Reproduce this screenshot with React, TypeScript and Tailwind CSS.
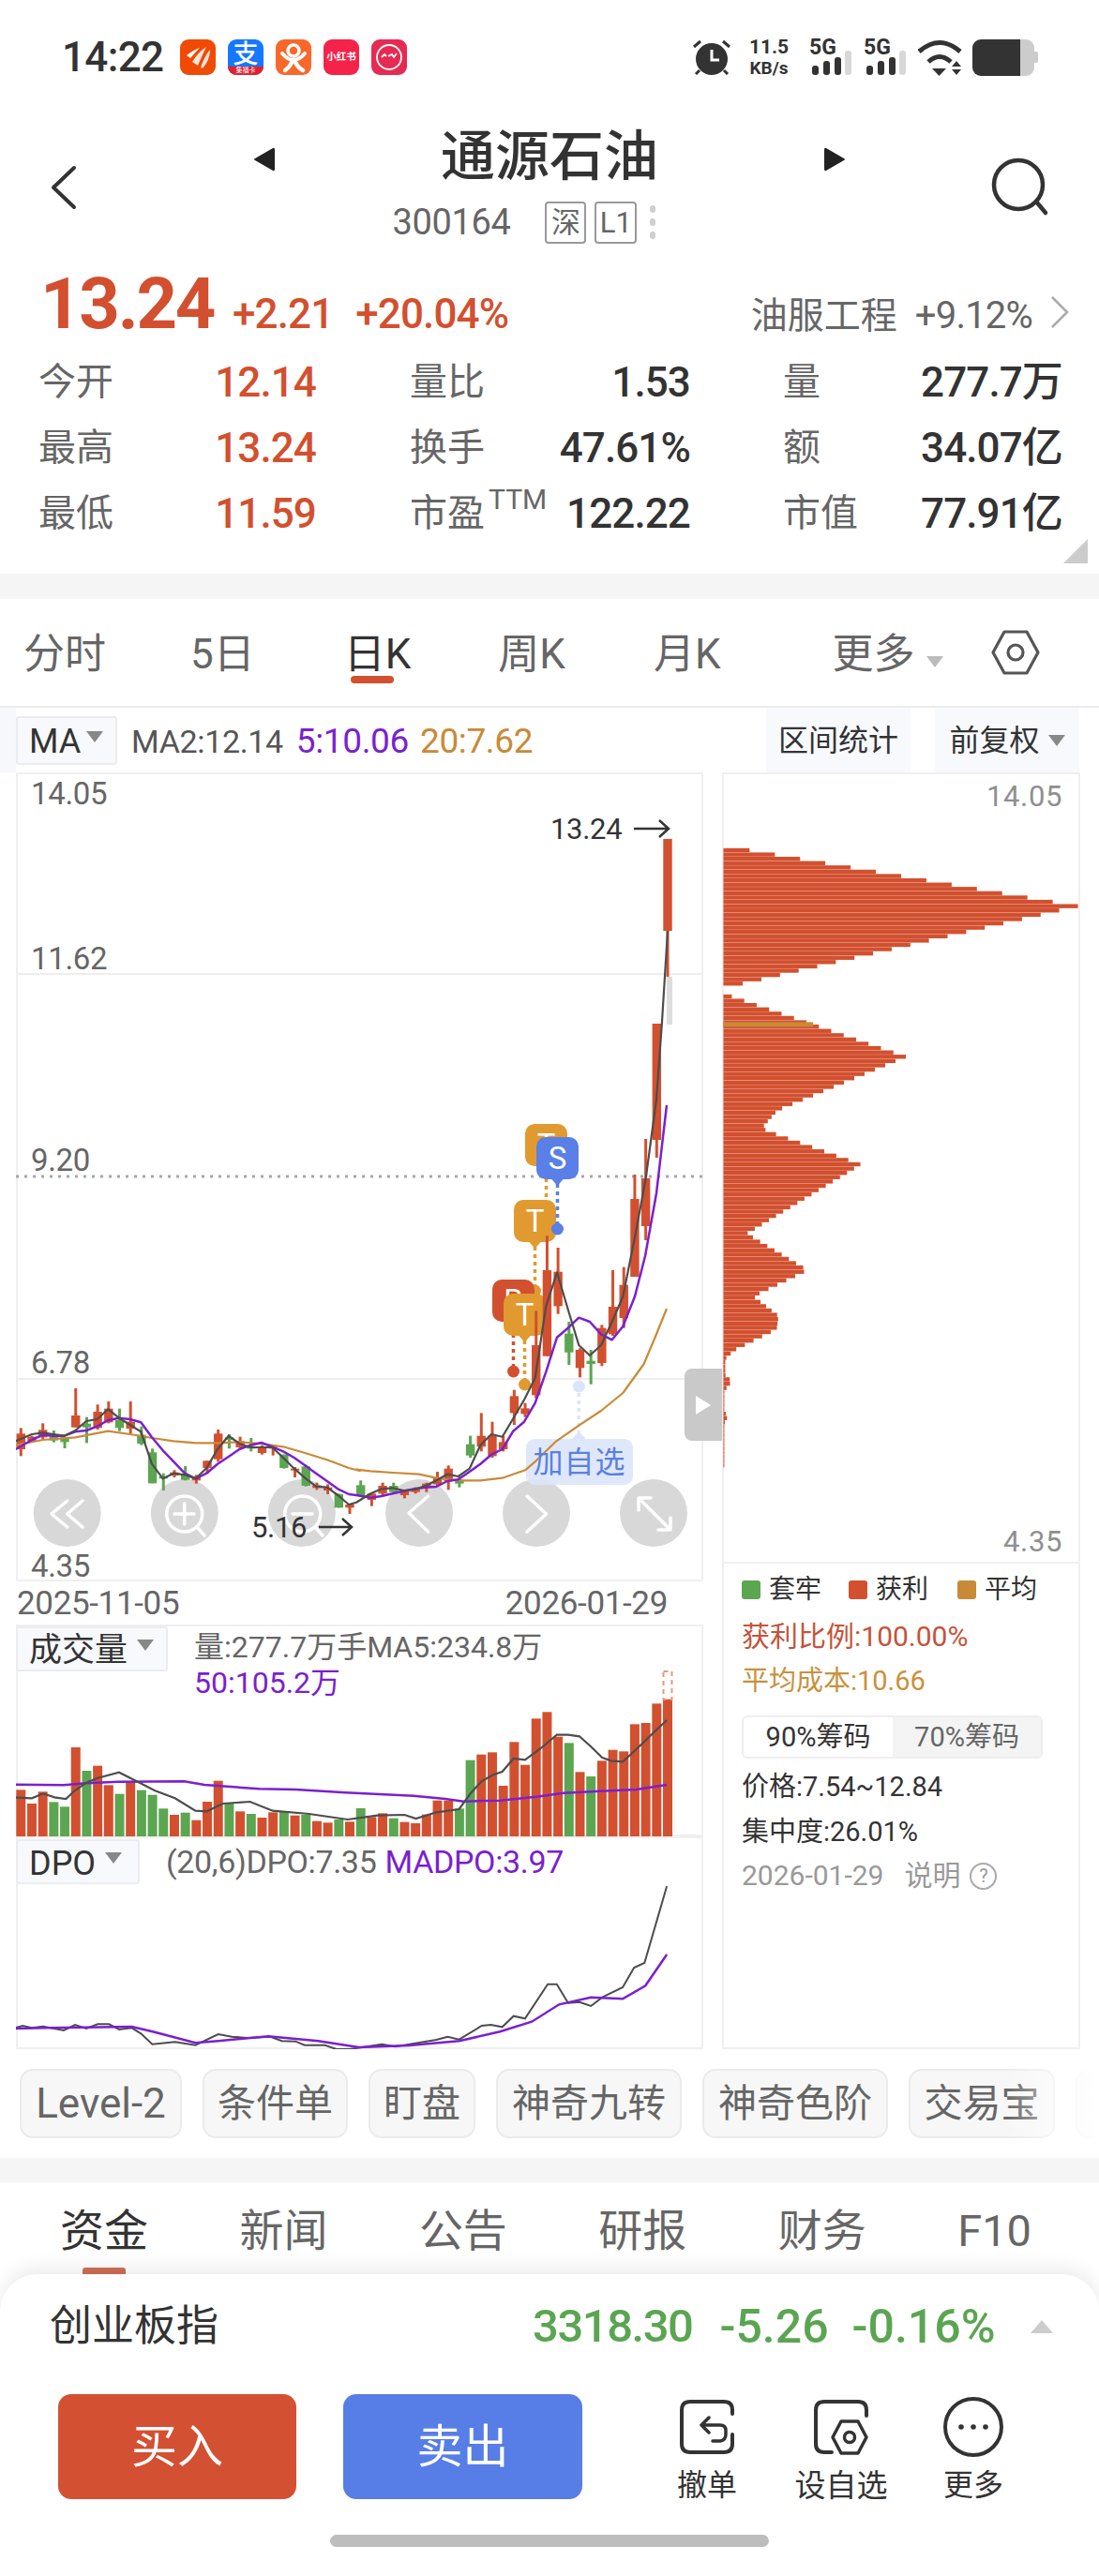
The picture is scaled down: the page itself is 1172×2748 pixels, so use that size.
import React from "react"

const RED = "#d2502f"
const GREEN = "#5ca651"
const PURPLE = "#7b1fd0"
const ORANGE = "#c98a37"

type Pt = [number, number]
type Candle = [number, number, number, number, "r" | "g"]

// candle values are read off the crops: [wick top, wick bottom, body top, body bottom]
const candlesA: Candle[] = [
  [250, 340, 268, 318, "r"], [275, 295, 278, 292, "r"], [235, 285, 256, 280, "r"], [258, 296, 272, 290, "g"],
  [280, 315, 280, 295, "g"], [123, 248, 210, 248, "r"], [215, 298, 236, 248, "g"], [175, 255, 198, 250, "r"],
  [165, 235, 188, 232, "r"], [188, 260, 225, 250, "g"], [165, 268, 230, 252, "r"], [245, 305, 272, 300, "g"],
  [316, 427, 328, 427, "g"], [395, 450, 405, 412, "g"], [385, 408, 392, 402, "r"], [372, 418, 398, 416, "g"],
  [400, 428, 405, 418, "r"], [355, 395, 355, 378, "r"], [255, 358, 268, 350, "r"], [270, 316, 280, 288, "g"],
  [278, 316, 292, 312, "r"], [282, 325, 308, 316, "g"], [305, 335, 310, 330, "r"], [305, 338, 310, 316, "r"],
  [335, 380, 335, 378, "g"], [375, 408, 380, 386, "r"], [368, 437, 373, 435, "g"], [425, 448, 434, 442, "r"],
  [430, 462, 440, 450, "r"], [460, 505, 462, 505, "g"], [495, 525, 495, 505, "r"], [418, 470, 433, 468, "g"],
  [458, 500, 460, 480, "r"],
]

const candlesB: Candle[] = [
  [845, 885, 855, 880, "r"], [845, 880, 855, 875, "g"], [868, 895, 870, 885, "r"], [860, 880, 865, 875, "r"],
  [845, 875, 848, 860, "r"], [810, 855, 828, 850, "r"], [790, 868, 800, 840, "r"], [825, 860, 835, 848, "g"],
  [695, 765, 722, 758, "g"], [622, 745, 695, 730, "r"], [650, 765, 695, 760, "r"], [695, 745, 715, 738, "r"],
  [548, 660, 568, 622, "r"], [590, 635, 607, 625, "r"], [295, 575, 405, 565, "r"], [55, 440, 165, 440, "r"],
  [93, 305, 170, 280, "r"], [330, 468, 368, 428, "g"], [415, 508, 420, 478, "r"], [420, 530, 455, 465, "g"],
  [340, 472, 350, 462, "r"], [165, 375, 282, 370, "r"], [155, 350, 212, 318, "r"],
]

const candlesC: Candle[] = [
  [1253, 1362, 1279, 1362, "r"], [1215, 1323, 1257, 1308, "r"], [1092, 1235, 1092, 1216, "r"], [895, 1042, 895, 993, "r"],
]

const toA = (z: number) => 1440 + z / 3
const toB = (z: number) => 1300 + z / 3

const candles: Candle[] = [
  ...candlesA.map(([a, b, c, d, k]): Candle => [toA(a), toA(b), toA(c), toA(d), k]),
  ...candlesB.map(([a, b, c, d, k]): Candle => [toB(a), toB(b), toB(c), toB(d), k]),
  ...candlesC,
]

const candleX = (i: number) => 22.3 + 11.69 * i

const a2p = (pts: Pt[]): Pt[] => pts.map(([x, y]) => [10 + x / 3, 1440 + y / 3])
const b2p = (pts: Pt[]): Pt[] => pts.map(([x, y]) => [380 + x / 3, 1300 + y / 3])
const line = (pts: Pt[]) => pts.map(([x, y]) => `${x.toFixed(1)},${y.toFixed(1)}`).join(" ")

const ma2: Pt[] = [
  ...a2p([[20, 292], [72, 270], [107, 265], [141, 270], [176, 275], [211, 258], [246, 228], [281, 222], [316, 190], [351, 218], [386, 240], [421, 262], [456, 365], [491, 412], [526, 395], [561, 400], [596, 412], [631, 378], [666, 318], [701, 275], [736, 300], [771, 312], [806, 312], [841, 312], [876, 345], [911, 380], [946, 410], [981, 437], [1016, 440], [1051, 465], [1086, 495]]),
  ...b2p([[0, 908], [46, 880], [81, 865], [116, 862], [151, 870], [186, 867], [221, 855], [256, 838], [291, 818], [326, 825], [362, 800], [397, 725], [432, 690], [467, 698], [502, 640], [537, 580], [572, 510], [607, 280], [642, 172], [677, 290], [712, 405], [747, 438], [783, 405], [818, 330], [853, 250]]),
  [677, 1320], [688.7, 1257], [700, 1173], [706, 1090], [712, 993],
]

const ma5: Pt[] = [
  ...a2p([[20, 318], [72, 288], [107, 272], [141, 275], [176, 275], [211, 262], [246, 258], [281, 245], [316, 225], [351, 218], [386, 222], [421, 232], [456, 280], [491, 322], [526, 358], [561, 395], [596, 412], [631, 395], [666, 365], [701, 342], [736, 318], [771, 305], [806, 297], [841, 310], [876, 325], [911, 345], [946, 370], [981, 395], [1016, 420], [1051, 445], [1086, 462]]),
  ...b2p([[0, 885], [46, 893], [81, 888], [116, 880], [151, 872], [186, 865], [221, 860], [256, 858], [291, 840], [326, 835], [362, 810], [397, 785], [432, 755], [467, 738], [502, 680], [537, 650], [572, 590], [607, 490], [642, 380], [677, 350], [712, 317], [747, 330], [783, 370], [818, 388], [853, 345]]),
  [677, 1383], [688, 1340], [700, 1273], [711, 1179],
]

const ma20: Pt[] = [
  ...a2p([[20, 305], [107, 288], [211, 280], [316, 260], [386, 270], [456, 282], [526, 292], [596, 298], [666, 298], [736, 295], [806, 300], [876, 310], [946, 330], [1016, 352], [1086, 378], [1121, 387]]),
  ...b2p([[0, 803], [46, 808], [116, 813], [200, 818], [256, 830], [291, 835], [340, 838], [397, 838], [467, 830], [540, 805], [575, 775], [640, 712], [712, 662], [783, 615], [853, 558], [920, 465], [960, 370], [993, 288]]),
]

// volume tops and lines come from the crop at (0,1720), 2.063x across, 3x down
const volTops = [568, 612, 574, 607, 622, 432, 507, 491, 553, 581, 543, 569, 584, 628, 648, 641, 665, 606, 539, 612, 637, 645, 657, 640, 636, 650, 648, 668, 673, 663, 670, 627, 655, 643, 659, 671, 675, 647, 602, 602, 628, 473, 455, 448, 555, 415, 488, 340, 319, 398, 418, 511, 525, 475, 440, 445, 358, 354, 292, 278]

const c2p = (pts: Pt[]): Pt[] => pts.map(([x, y]) => [x / 2.063, 1720 + y / 3])

const volMa5 = c2p([[34, 593], [70, 595], [95, 580], [120, 592], [145, 597], [165, 570], [190, 545], [215, 530], [262, 512], [300, 540], [340, 570], [385, 595], [430, 635], [455, 637], [490, 612], [550, 606], [600, 635], [680, 645], [765, 663], [830, 650], [890, 648], [915, 660], [960, 640], [1010, 630], [1035, 580], [1060, 540], [1085, 520], [1105, 510], [1130, 468], [1155, 472], [1190, 435], [1225, 392], [1250, 392], [1275, 397], [1300, 430], [1325, 465], [1345, 475], [1370, 478], [1395, 445], [1420, 410], [1445, 375], [1467, 345]])
const volMa50 = c2p([[34, 551], [140, 553], [190, 547], [260, 542], [405, 541], [450, 552], [570, 565], [650, 567], [760, 577], [910, 587], [980, 597], [1020, 605], [1100, 602], [1180, 590], [1240, 578], [1320, 572], [1400, 567], [1467, 552]])
const dpo = c2p([[34, 1330], [50, 1323], [70, 1330], [95, 1325], [140, 1338], [165, 1320], [190, 1332], [215, 1318], [240, 1318], [262, 1335], [290, 1330], [310, 1348], [335, 1382], [385, 1375], [430, 1385], [480, 1350], [510, 1358], [545, 1362], [595, 1358], [620, 1372], [650, 1373], [670, 1385], [715, 1385], [740, 1398], [770, 1398], [840, 1382], [870, 1390], [960, 1368], [985, 1358], [1010, 1367], [1060, 1323], [1080, 1320], [1105, 1327], [1130, 1292], [1155, 1300], [1205, 1190], [1225, 1190], [1250, 1250], [1275, 1247], [1300, 1260], [1325, 1232], [1370, 1200], [1395, 1137], [1418, 1122], [1467, 877]])
const madpo = c2p([[34, 1332], [100, 1330], [190, 1328], [290, 1326], [340, 1343], [430, 1378], [480, 1372], [590, 1357], [700, 1372], [790, 1392], [900, 1386], [1010, 1372], [1100, 1342], [1170, 1310], [1230, 1255], [1300, 1232], [1370, 1237], [1420, 1195], [1467, 1095]])

// [page y, bar width] keyframes of the chip distribution
const chipKeys: Pt[] = [[905, 28], [964.8, 379], [969.4, 359], [1051, 6], [1060, 5], [1125.8, 195], [1183, 58], [1202, 41], [1206, 49], [1241, 147], [1315, 25], [1354, 90], [1382, 32], [1403, 59], [1417, 57], [1440, 11], [1449, 2], [1466, 2], [1473, 9], [1483, 1], [1503, 1], [1512, 4], [1518, 1], [1564, 1]]

const chipWidth = (y: number) => {
  for (let i = 1; i < chipKeys.length; i++) {
    const [y0, w0] = chipKeys[i - 1]
    const [y1, w1] = chipKeys[i]
    if (y <= y1) return w0 + ((w1 - w0) * (y - y0)) / (y1 - y0)
  }
  return 0
}

const chipRows: number[] = []
for (let y = 905; y < 1564; y += 4.6) {
  if (y < 1052 || y > 1059) chipRows.push(y)
}

const Caret = ({ light }: { light?: boolean }) => (
  <span
    className={`inline-block border-x-[9px] border-t-[12px] border-x-transparent ${light ? "border-t-[#bbbbbb]" : "border-t-[#888888]"}`}
  />
)

const StatusBar = () => (
  <div className="flex h-[122px] items-center pl-[66px] pr-[65px]">
    <span className="w-[108px] text-[44px] font-medium leading-none tracking-[-0.015em] text-[#333]">14:22</span>
    <div className="ml-[18px] flex gap-[13px]">
      <div className="h-[38px] w-[38px] rounded-[9px] bg-[#f04a05]">
        <svg viewBox="0 0 38 38" className="h-full w-full" fill="#fff">
          <path d="M7 17 Q15 11 21 9 Q16 14 11 20Z" />
          <path d="M13 24 Q20 13 28 8 Q24 16 19 28Z" opacity=".85" />
          <path d="M22 30 Q26 18 32 11 Q32 22 24 31Z" opacity=".85" />
        </svg>
      </div>
      <div className="relative flex h-[38px] w-[38px] justify-center overflow-hidden rounded-[9px] bg-[#1677ff]">
        <span className="mt-[1px] text-[27px] font-medium leading-[30px] text-white">支</span>
        <span className="absolute bottom-0 h-[9px] w-full bg-[#e3202c] text-center text-[7px] leading-[9px] text-white">集福卡</span>
      </div>
      <div className="h-[38px] w-[38px] rounded-[9px] bg-[#f9682b]">
        <svg viewBox="0 0 38 38" className="h-full w-full" fill="none" stroke="#fff" strokeLinecap="round">
          <circle cx="19" cy="12" r="6" strokeWidth="3.5" />
          <path d="M7 15 Q13 22 19 22 Q25 22 31 15" strokeWidth="4" />
          <path d="M18 22 Q16 29 10 33 M20 22 Q23 30 29 33" strokeWidth="4.5" />
        </svg>
      </div>
      <div className="flex h-[38px] w-[38px] items-center justify-center rounded-[9px] bg-[#f5234a] text-[10.5px] font-bold leading-none text-white">
        小红书
      </div>
      <div className="h-[38px] w-[38px] rounded-[9px] bg-[#e62a52]">
        <svg viewBox="0 0 38 38" className="h-full w-full" fill="none" stroke="#fff" strokeWidth="1.8">
          <circle cx="19" cy="19" r="13" />
          <path d="M11 19 L14 16 L16 18 M18 18 L22 16 L24 19 L27 15" />
        </svg>
      </div>
    </div>
    <div className="ml-auto flex items-center">
      <svg viewBox="0 0 42 38" className="h-[38px] w-[42px]" fill="#333">
        <circle cx="21" cy="21" r="17" />
        <path d="M2 8 L9 2 M40 8 L33 2 M8 33 L4 37 M34 33 L38 37" stroke="#333" strokeWidth="3" />
        <path d="M21 11 V22 H29" stroke="#fff" strokeWidth="3" fill="none" />
      </svg>
      <div className="ml-[18px] flex w-[44px] flex-col items-center font-bold text-[#333]">
        <span className="text-[21px] leading-[24px]">11.5</span>
        <span className="text-[19px] leading-[22px]">KB/s</span>
      </div>
      {[0, 1].map((n) => (
        <div key={n} className={`relative h-[38px] w-[45px] ${n === 0 ? "ml-[21px]" : "ml-[13px]"}`}>
          <span className="absolute left-0 top-[-3px] text-[23px] font-bold leading-[24px] text-[#333]">5G</span>
          <svg viewBox="0 0 45 38" className="absolute inset-0 h-full w-full">
            <rect x="3" y="28" width="7" height="10" rx="3" fill="#333" />
            <rect x="15" y="23" width="7" height="15" rx="3" fill="#333" />
            <rect x="27" y="19" width="7" height="19" rx="3" fill="#333" />
            <rect x="38" y="12" width="7" height="26" rx="3" fill="#d8d8d8" />
          </svg>
        </div>
      ))}
      <svg viewBox="0 0 47 39" className="ml-[13px] h-[39px] w-[47px]" fill="none" stroke="#333" strokeWidth="5">
        <path d="M1 13 Q23 -6 45 13" />
        <path d="M11 24 Q23 13 35 24" />
        <path d="M15 31 H30 L22.5 39Z" fill="#333" stroke="none" />
        <path d="M36 29 L41 23 L46 29Z M36 32 H46 L41 38Z" fill="#333" stroke="none" />
      </svg>
      <div className="relative ml-[11px] flex h-[39px] w-[66px] overflow-hidden rounded-[9px]">
        <div className="w-[51px] bg-[#333]" />
        <div className="w-[15px] bg-[#cccccc]" />
      </div>
      <div className="h-[12px] w-[4px] rounded-r-[2px] bg-[#cccccc]" />
    </div>
  </div>
)

const Header = () => (
  <div className="relative flex h-[150px] flex-col items-center">
    <svg viewBox="0 0 28 48" className="absolute left-[54px] top-[54px] h-[48px] w-[28px]" fill="none" stroke="#333" strokeWidth="4" strokeLinecap="round" strokeLinejoin="round">
      <path d="M25 3 L3 24 L25 45" />
    </svg>
    <svg viewBox="0 0 25 28" className="absolute left-[269px] top-[34px] h-[28px] w-[25px]" fill="#222">
      <path d="M22 2 Q24 1 24 4 V24 Q24 27 22 26 L3 15 Q1 14 3 13Z" />
    </svg>
    <svg viewBox="0 0 25 28" className="absolute left-[878px] top-[34px] h-[28px] w-[25px]" fill="#222">
      <path d="M3 2 Q1 1 1 4 V24 Q1 27 3 26 L22 15 Q24 14 22 13Z" />
    </svg>
    <svg viewBox="0 0 64 64" className="absolute left-[1055px] top-[46px] h-[64px] w-[64px]" fill="none" stroke="#333" strokeWidth="4.5" strokeLinecap="round">
      <circle cx="31" cy="29" r="26" />
      <path d="M50 47 L60 59" />
    </svg>
    <h1 className="mt-[16px] text-[58px] font-medium leading-[58px] text-[#333]">通源石油</h1>
    <div className="mr-[54px] mt-[18px] flex items-center">
      <span className="text-[38px] leading-[46px] tracking-[-0.01em] text-[#666]">300164</span>
      <span className="ml-[37px] flex h-[45px] w-[44px] items-center justify-center rounded-[4px] border-2 border-[#999] text-[31px] leading-none text-[#666]">深</span>
      <span className="ml-[9px] flex h-[45px] w-[45px] items-center justify-center rounded-[4px] border-2 border-[#999] text-[31px] leading-none text-[#666]">L1</span>
      <span className="ml-[14px] flex flex-col gap-[6px]">
        <i className="h-[8px] w-[6px] rounded-full bg-[#cfcfcf]" />
        <i className="h-[8px] w-[6px] rounded-full bg-[#cfcfcf]" />
        <i className="h-[8px] w-[6px] rounded-full bg-[#cfcfcf]" />
      </span>
    </div>
  </div>
)

const stats = [
  [["今开", "12.14"], ["量比", "1.53"], ["量", "277.7万"]],
  [["最高", "13.24"], ["换手", "47.61%"], ["额", "34.07亿"]],
  [["最低", "11.59"], ["市盈", "122.22"], ["市值", "77.91亿"]],
]

const Quote = () => (
  <div className="relative h-[340px]">
    <div className="flex h-[98px] items-baseline pl-[43px] pt-[14px]">
      <span className="w-[188px] text-[76px] font-bold leading-[76px] tracking-[-0.03em] text-[#d2502f]">13.24</span>
      <span className="ml-[17px] text-[44px] font-medium leading-none tracking-[-0.02em] text-[#d2502f]">+2.21</span>
      <span className="ml-[24px] text-[44px] font-medium leading-none tracking-[-0.02em] text-[#d2502f]">+20.04%</span>
      <span className="ml-auto text-[39px] leading-none text-[#666]">油服工程</span>
      <span className="ml-[19px] text-[40px] leading-none tracking-[-0.02em] text-[#666]">+9.12%</span>
      <svg viewBox="0 0 20 36" className="ml-[19px] mr-[32px] mt-[10px] h-[36px] w-[20px] self-center" fill="none" stroke="#aaa" strokeWidth="2.5">
        <path d="M2 2 L18 18 L2 34" />
      </svg>
    </div>
    <div className="flex flex-col pl-[41px] pt-[3px]">
      {stats.map((row, r) => (
        <div key={r} className="flex h-[70px] items-center">
          {row.map(([label, value], c) => (
            <div key={label} className={`flex items-center justify-between ${c === 0 ? "w-[296px]" : c === 1 ? "ml-[100px] w-[299px]" : "ml-[99px] w-[298px]"}`}>
              <span className="flex text-[40px] leading-none text-[#666]">
                {label}
                {label === "市盈" && <sup className="top-[-10px] ml-[4px] text-[30px] font-normal leading-none">TTM</sup>}
              </span>
              <span className={`text-[44px] font-medium leading-none tracking-[-0.02em] ${c === 0 ? "text-[#d2502f]" : "text-[#333]"}`}>{value}</span>
            </div>
          ))}
        </div>
      ))}
    </div>
    <svg viewBox="0 0 26 26" className="absolute left-[1134px] top-[303px] h-[26px] w-[26px]" fill="#cccccc">
      <path d="M26 0 V26 H0Z" />
    </svg>
  </div>
)

const kTabs = [
  { label: "分时", cls: "ml-[25px] text-[#666]" },
  { label: "5日", cls: "ml-[90px] text-[#666]" },
  { label: "日K", cls: "ml-[95px] text-[#333]", active: true },
  { label: "周K", cls: "ml-[93px] text-[#666]" },
  { label: "月K", cls: "ml-[94px] text-[#666]" },
]

const KTabs = () => (
  <div className="flex h-[116px] items-center border-b-2 border-[#ececec] pt-[4px] text-[44px] leading-none">
    {kTabs.map((t) => (
      <span key={t.label} className={`relative ${t.cls}`}>
        {t.label}
        {t.active && <i className="absolute left-[7px] top-[45px] h-[8px] w-[46px] rounded-full bg-[#d2502f]" />}
      </span>
    ))}
    <span className="ml-[119px] text-[#666]">更多</span>
    <span className="ml-[12px] -mt-[3px]">
      <Caret light />
    </span>
    <svg viewBox="0 0 54 54" className="ml-[50px] -mt-[4px] h-[54px] w-[54px]" fill="none" stroke="#555" strokeWidth="3.2" strokeLinejoin="round">
      <path d="M15 5 H39 L51 27 L39 49 H15 L3 27Z" />
      <circle cx="27" cy="27" r="8" />
    </svg>
  </div>
)

const IndicatorRow = () => (
  <div className="flex h-[69px] items-center">
    <div className="h-full w-[17px] bg-[#f7f8fc]" />
    <div className="flex h-[52px] w-[108px] items-center rounded-[3px] border-2 border-[#ececf0] bg-[#f8f9fd] pl-[12px]">
      <span className="mt-[2px] text-[36px] leading-none text-[#333]">MA</span>
      <span className="ml-[6px] mb-[6px]">
        <Caret />
      </span>
    </div>
    <span className="ml-[15px] mt-[2px] text-[34px] leading-none tracking-[-0.01em] text-[#555]">MA2:12.14</span>
    <span className="ml-[14px] mt-[2px] text-[37px] leading-none tracking-[-0.01em] text-[#7b1fd0]">5:10.06</span>
    <span className="ml-[12px] mt-[2px] text-[37px] leading-none tracking-[-0.01em] text-[#c98a37]">20:7.62</span>
    <div className="ml-auto flex h-full items-center gap-[26px] pr-[21px]">
      <div className="flex h-full w-[154px] items-center justify-center bg-[#f8f9fd] text-[32px] leading-none text-[#333]">区间统计</div>
      <div className="flex h-full w-[154px] items-center justify-center gap-[9px] bg-[#f8f9fd] text-[32px] leading-none text-[#333]">
        前复权
        <Caret />
      </div>
    </div>
  </div>
)

const Marker = ({ x, y, fill, label, end, dot = true }: { x: number; y: number; fill: string; label: string; end: number; dot?: boolean }) => {
  const cx = x + 22.5
  return (
    <g>
      <line x1={cx} y1={y + 50} x2={cx} y2={end} stroke={fill} strokeWidth="3.5" strokeDasharray="4 4" />
      {dot && <circle cx={cx} cy={end} r="6.5" fill={fill} />}
      <path d={`M${cx - 7} ${y + 44} L${cx} ${y + 52} L${cx + 7} ${y + 44}Z`} fill={fill} />
      <rect x={x} y={y} width="45" height="45" rx="10" fill={fill} />
      <text x={cx} y={y + 34} textAnchor="middle" fontSize="33" fill="#fff">
        {label}
      </text>
    </g>
  )
}

const MainChart = () => (
  <div className="relative h-[863px] ring-2 ring-inset ring-[#efefef]">
    <svg viewBox="17 824 733 863" className="absolute inset-0 h-full w-full">
      <line x1="17" x2="750" y1="1039" y2="1039" stroke="#eeeeee" strokeWidth="2" />
      <line x1="17" x2="750" y1="1471" y2="1471" stroke="#eeeeee" strokeWidth="2" />
      <line x1="17" x2="750" y1="1255" y2="1255" stroke="#a8a8a8" strokeWidth="3" strokeDasharray="3 6" />
      <rect x="711" y="1042" width="6" height="51" fill="#dddddd" />

      {[71.7, 196.8, 321.9, 447, 572, 697].map((cx) => (
        <circle key={cx} cx={cx} cy="1614" r="36" fill="#d8d8d8" />
      ))}
      <g fill="none" stroke="#fff" strokeWidth="3.5" strokeLinecap="round" strokeLinejoin="round">
        <path d="M71.7 1601 L55 1615 L71.7 1629 M88 1601 L71.7 1615 L88 1629" />
        <circle cx="196.7" cy="1615" r="19" />
        <path d="M210 1629 L218 1638 M186 1615 H207 M196.7 1604 V1626" />
        <circle cx="322.7" cy="1615" r="19" />
        <path d="M336 1629 L344 1638 M312 1615 H333" />
        <path d="M456.6 1596 L436 1614 L456.6 1634" />
        <path d="M562 1596 L582.6 1615 L562 1634" />
        <path d="M683 1600 L713 1630 M681 1611 V1598 H694 M715 1619 V1632 H702" />
      </g>

      <line x1="617.3" x2="617.3" y1="1486" y2="1530" stroke="#dbe5fa" strokeWidth="3.5" strokeDasharray="4 4" />
      <circle cx="617.3" cy="1479" r="6.5" fill="#dbe5fa" />
      <path d="M610 1535 L617.3 1527 L624.6 1535Z" fill="#dbe5fa" />
      <rect x="561" y="1535" width="114" height="49" rx="9" fill="#dbe5fa" fillOpacity=".88" />

      <Marker x={560} y={1199} fill="#e09a30" label="T" end={1290} dot={false} />
      <Marker x={548} y={1280} fill="#e09a30" label="T" end={1377} />
      <Marker x={525} y={1365} fill="#d2502f" label="B" end={1463} />
      <Marker x={537} y={1380} fill="#e09a30" label="T" end={1477} />
      <Marker x={572} y={1213} fill="#5a7fe6" label="S" end={1311} />

      {candles.map(([wt, wb, bt, bb, k], i) => (
        <g key={i} fill={k === "r" ? RED : GREEN}>
          <rect x={candleX(i) - 1.5} y={wt} width="3" height={wb - wt} />
          <rect x={candleX(i) - 4.7} y={bt} width="9.4" height={Math.max(bb - bt, 2)} />
        </g>
      ))}

      <polyline points={line(ma20)} fill="none" stroke={ORANGE} strokeWidth="2.2" strokeLinejoin="round" />
      <polyline points={line(ma5)} fill="none" stroke={PURPLE} strokeWidth="2.5" strokeLinejoin="round" />
      <polyline points={line(ma2)} fill="none" stroke="#4d4d4d" strokeWidth="2.2" strokeLinejoin="round" />

      <g fill="none" stroke="#333" strokeWidth="2.5">
        <path d="M676 884 H713 M703 875 L713 884 L703 893" />
        <path d="M340 1629 H375 M365 1620 L375 1629 L365 1638" />
      </g>
    </svg>
    <span className="absolute left-[16px] top-[22px] -translate-y-1/2 text-[33px] leading-none tracking-[-0.01em] text-[#666]">14.05</span>
    <span className="absolute left-[16px] top-[198px] -translate-y-1/2 text-[33px] leading-none tracking-[-0.01em] text-[#666]">11.62</span>
    <span className="absolute left-[16px] top-[413px] -translate-y-1/2 text-[33px] leading-none tracking-[-0.01em] text-[#666]">9.20</span>
    <span className="absolute left-[16px] top-[629px] -translate-y-1/2 text-[33px] leading-none tracking-[-0.01em] text-[#666]">6.78</span>
    <span className="absolute left-[16px] top-[846px] -translate-y-1/2 text-[33px] leading-none tracking-[-0.01em] text-[#666]">4.35</span>
    <span className="absolute left-[570px] top-[60px] -translate-y-1/2 text-[31px] leading-none tracking-[-0.01em] text-[#333]">13.24</span>
    <span className="absolute left-[251px] top-[805px] -translate-y-1/2 text-[31px] leading-none tracking-[-0.01em] text-[#333]">5.16</span>
    <span className="absolute left-[544px] top-[711px] flex h-[49px] w-[114px] items-center justify-center text-[32px] leading-none tracking-[1px] text-[#5a80e0]">加自选</span>
  </div>
)

const VolumeChart = () => (
  <div className="relative h-[226px] ring-2 ring-inset ring-[#efefef]">
    <svg viewBox="17 1733 733 226" className="absolute inset-0 h-full w-full">
      {volTops.map((t, i) => (
        <rect
          key={i}
          x={candleX(i) - 5}
          y={1720 + t / 3}
          width="10"
          height={1959 - (1720 + t / 3)}
          fill={candles[i][4] === "r" ? RED : GREEN}
        />
      ))}
      <rect x="707.5" y="1783" width="9" height="30" fill="none" stroke="#e09a80" strokeWidth="2" strokeDasharray="5 4" />
      <polyline points={line(volMa50)} fill="none" stroke={PURPLE} strokeWidth="2.5" />
      <polyline points={line(volMa5)} fill="none" stroke="#4d4d4d" strokeWidth="2.2" />
    </svg>
    <div className="absolute left-0 top-[2px] flex h-[48px] w-[162px] items-center rounded-[3px] border-2 border-[#ececf0] bg-[#f8f9fd] pl-[12px]">
      <span className="mt-[3px] text-[35px] leading-none text-[#333]">成交量</span>
      <span className="ml-[10px] mb-[6px]">
        <Caret />
      </span>
    </div>
    <div className="absolute left-[190px] top-[24px] -translate-y-1/2 whitespace-nowrap text-[32px] leading-none text-[#666]">量:277.7万手MA5:234.8万</div>
    <div className="absolute left-[190px] top-[62px] -translate-y-1/2 whitespace-nowrap text-[32px] leading-none text-[#7b1fd0]">50:105.2万</div>
  </div>
)

const DpoChart = () => (
  <div className="relative h-[227px] ring-2 ring-inset ring-[#efefef]">
    <svg viewBox="17 1959 733 227" className="absolute inset-0 h-full w-full">
      <polyline points={line(dpo)} fill="none" stroke="#4d4d4d" strokeWidth="2" />
      <polyline points={line(madpo)} fill="none" stroke={PURPLE} strokeWidth="2.5" />
    </svg>
    <div className="absolute left-0 top-[3px] flex h-[48px] w-[132px] items-center rounded-[3px] border-2 border-[#ececf0] bg-[#f8f9fd] pl-[12px]">
      <span className="mt-[3px] text-[36px] leading-none text-[#333]">DPO</span>
      <span className="ml-[10px] mb-[6px]">
        <Caret />
      </span>
    </div>
    <div className="absolute left-[160px] top-[27px] -translate-y-1/2 whitespace-nowrap text-[34px] leading-none tracking-[-0.01em] text-[#666]">
      (20,6)DPO:7.35 <span className="ml-[1px] text-[#7b1fd0]">MADPO:3.97</span>
    </div>
  </div>
)

const ChipPanel = () => (
  <div className="flex h-[1362px] w-[382px] flex-col ring-2 ring-inset ring-[#efefef]">
    <div className="relative h-[844px] shrink-0 border-b-2 border-[#efefef]">
      <svg viewBox="770 824 382 844" className="absolute inset-0 h-full w-full">
        {chipRows.map((y) => (
          <rect key={y} x="771" y={y} width={chipWidth(y)} height="4.4" fill={RED} />
        ))}
        <rect x="771" y="1091" width="96" height="5" fill={ORANGE} />
      </svg>
      <span className="absolute right-[19px] top-[25px] -translate-y-1/2 text-[31px] leading-none tracking-[0.02em] text-[#8f8f8f]">14.05</span>
      <span className="absolute right-[19px] top-[820px] -translate-y-1/2 text-[31px] leading-none tracking-[0.02em] text-[#8f8f8f]">4.35</span>
    </div>
    <div className="flex flex-col pl-[21px] text-[29px] leading-none">
      <div className="flex h-[59px] items-center pb-[3px] text-[28px] text-[#333]">
        <i className="h-[20px] w-[20px] rounded-[3px] bg-[#5ca651]" />
        <span className="ml-[9px]">套牢</span>
        <i className="ml-[29px] h-[20px] w-[20px] rounded-[3px] bg-[#d2502f]" />
        <span className="ml-[9px]">获利</span>
        <i className="ml-[31px] h-[20px] w-[20px] rounded-[3px] bg-[#c98a37]" />
        <span className="ml-[9px]">平均</span>
      </div>
      <div className="flex h-[38px] items-center text-[30px] text-[#c5533a]">获利比例:100.00%</div>
      <div className="flex h-[56px] items-center text-[#c9913f]">平均成本:10.66</div>
      <div className="mt-[9px] flex h-[46px] w-[321px] overflow-hidden rounded-[6px] border-2 border-[#eeeeee]">
        <span className="flex w-[159px] items-center justify-center bg-white text-[#333]">90%筹码</span>
        <span className="flex flex-1 items-center justify-center bg-[#f4f4f4] text-[#666]">70%筹码</span>
      </div>
      <div className="flex h-[60px] items-center text-[#333]">价格:7.54~12.84</div>
      <div className="flex h-[36px] items-center text-[#333]">集中度:26.01%</div>
      <div className="flex h-[58px] items-center text-[30px] text-[#999]">
        2026-01-29
        <span className="ml-[22px]">说明</span>
        <span className="ml-[10px] flex h-[29px] w-[29px] items-center justify-center rounded-full border-2 border-[#aaa] text-[20px]">?</span>
      </div>
    </div>
  </div>
)

const Charts = () => (
  <div className="relative flex gap-[20px] pl-[17px]">
    <div className="flex w-[733px] flex-col">
      <MainChart />
      <div className="flex h-[46px] items-center justify-between pl-[1px] pr-[38px] text-[35px] leading-none tracking-[-0.01em] text-[#666]">
        <span>2025-11-05</span>
        <span>2026-01-29</span>
      </div>
      <VolumeChart />
      <DpoChart />
    </div>
    <ChipPanel />
    <div className="absolute left-[730px] top-[636px] flex h-[77px] w-[40px] items-center justify-center rounded-l-[8px] bg-[#c9c9c9]">
      <span className="border-y-[10px] border-l-[16px] border-y-transparent border-l-white" />
    </div>
  </div>
)

const tools = [
  { label: "Level-2", cls: "w-[173px] text-[44px]" },
  { label: "条件单", cls: "w-[155px] text-[41px]" },
  { label: "盯盘", cls: "w-[114px] text-[41px]" },
  { label: "神奇九转", cls: "w-[198px] text-[41px]" },
  { label: "神奇色阶", cls: "w-[198px] text-[41px]" },
  { label: "交易宝", cls: "w-[156px] text-[41px]" },
  { label: "", cls: "w-[114px]" },
]

const Tools = () => (
  <div className="relative mt-[21px] flex h-[74px] gap-[22px] overflow-hidden pl-[21px]">
    {tools.map((t) => (
      <div
        key={t.cls}
        className={`flex h-full shrink-0 items-center justify-center rounded-[14px] border-2 border-[#ebebeb] bg-[#f7f7f7] leading-none text-[#666] ${t.cls}`}
      >
        {t.label}
      </div>
    ))}
    <div className="absolute right-0 top-0 h-full w-[100px] bg-gradient-to-r from-transparent to-white" />
  </div>
)

const NewsTabs = () => (
  <div className="flex h-[98px] items-start justify-between pl-[64px] pr-[72px] pt-[28px] text-[47px] leading-none text-[#666]">
    <span className="relative text-[#333]">
      资金
      <i className="absolute left-[24px] top-[63px] h-[10px] w-[46px] rounded-t-[3px] bg-[#cf6f55]" />
    </span>
    <span>新闻</span>
    <span>公告</span>
    <span>研报</span>
    <span>财务</span>
    <span>F10</span>
  </div>
)

const BottomSheet = () => (
  <div className="absolute bottom-0 left-0 right-0 flex h-[322px] flex-col rounded-t-[40px] bg-white shadow-[0_-8px_20px_rgba(0,0,0,0.07)]">
    <div className="flex h-[110px] items-center pl-[53px] pt-[1px]">
      <span className="w-[182px] text-[45px] leading-none text-[#333]">创业板指</span>
      <span className="ml-[333px] text-[49px] font-medium leading-none tracking-[-0.03em] text-[#5ba552]">3318.30</span>
      <span className="ml-[29px] text-[50px] font-medium leading-none text-[#5ba552]">-5.26</span>
      <span className="ml-[25px] text-[50px] font-medium leading-none text-[#5ba552]">-0.16%</span>
      <span className="ml-[37px] border-x-[12px] border-b-[14px] border-x-transparent border-b-[#cccccc]" />
    </div>
    <div className="mt-[18px] flex items-start pl-[62px]">
      <button className="flex h-[112px] w-[254px] items-center justify-center rounded-[14px] bg-[#d45033] text-[49px] leading-none text-white">买入</button>
      <button className="ml-[50px] flex h-[112px] w-[255px] items-center justify-center rounded-[14px] bg-[#577de6] text-[49px] leading-none text-white">卖出</button>
      <div className="ml-[100px] flex w-[66px] flex-col items-center">
        <svg viewBox="0 0 60 60" className="mt-[5px] h-[60px] w-[60px]" fill="none" stroke="#333" strokeWidth="4" strokeLinecap="round" strokeLinejoin="round">
          <path d="M57 16 V12 Q57 3 48 3 H12 Q3 3 3 12 V48 Q3 57 12 57 H48 Q57 57 57 48 V38" />
          <path d="M32 20 L24 28 L32 36 M25 28 H44 Q50 28 50 34 V38 Q50 44 44 45 H36" strokeWidth="3.5" />
        </svg>
        <span className="mt-[16px] text-[32px] leading-none text-[#333]">撤单</span>
      </div>
      <div className="ml-[60px] flex w-[100px] flex-col items-center">
        <svg viewBox="0 0 60 60" className="mt-[5px] h-[60px] w-[60px]" fill="none" stroke="#333" strokeWidth="4" strokeLinecap="round" strokeLinejoin="round">
          <path d="M57 18 V12 Q57 3 48 3 H12 Q3 3 3 12 V48 Q3 57 12 57 H20" />
          <path d="M30 24 H48 L57 41 L48 58 H30 L21 41Z" strokeWidth="3.5" />
          <circle cx="39" cy="41" r="5.5" strokeWidth="3.5" />
        </svg>
        <span className="mt-[16px] text-[33px] leading-none text-[#333]">设自选</span>
      </div>
      <div className="ml-[58px] flex w-[66px] flex-col items-center">
        <svg viewBox="0 0 66 66" className="mt-[2px] h-[66px] w-[66px]" fill="none" stroke="#333" strokeWidth="4">
          <circle cx="33" cy="33" r="30" />
          <circle cx="20" cy="33" r="2.8" fill="#333" stroke="none" />
          <circle cx="33" cy="33" r="2.8" fill="#333" stroke="none" />
          <circle cx="46" cy="33" r="2.8" fill="#333" stroke="none" />
        </svg>
        <span className="mt-[13px] text-[32px] leading-none text-[#333]">更多</span>
      </div>
    </div>
    <div className="mx-auto mt-[36px] h-[13px] w-[468px] rounded-full bg-[#bdbdbd]" />
  </div>
)

const App = () => (
  <div className="relative h-[2748px] w-[1172px] overflow-hidden bg-white [font-family:Roboto,'Noto_Sans_CJK_SC',sans-serif]">
    <StatusBar />
    <Header />
    <Quote />
    <div className="h-[27px] bg-[#f5f5f5]" />
    <KTabs />
    <IndicatorRow />
    <Charts />
    <Tools />
    <div className="mt-[21px] h-[26px] bg-[#f5f5f5]" />
    <NewsTabs />
    <BottomSheet />
  </div>
)

export default App
